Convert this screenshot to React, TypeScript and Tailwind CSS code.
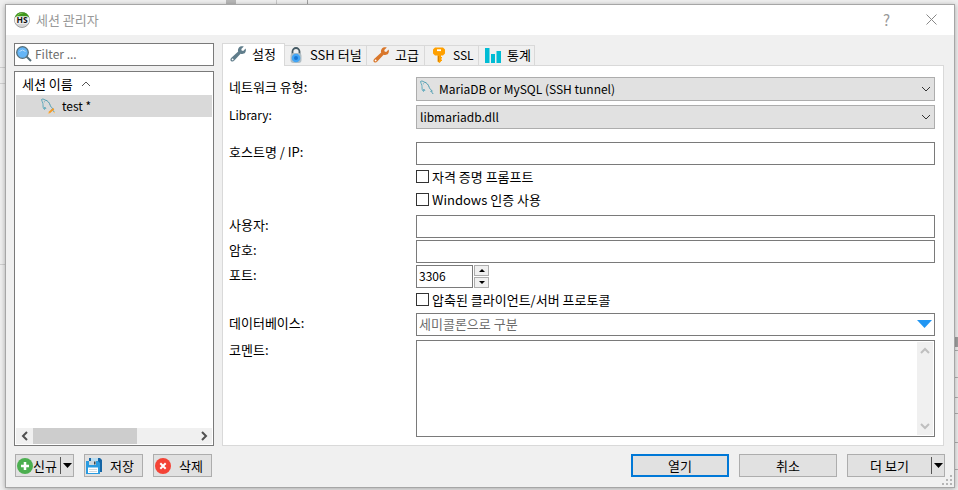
import { useState, type ReactNode } from "react";

const push =
  "flex h-[23px] items-center border border-[#adadad] bg-[#e1e1e1] text-black";
const box = "border border-[#7a7a7a] bg-white";

function Chevron({ dir, className }: { dir: "up" | "down" | "left" | "right"; className: string }) {
  const d = {
    up: "M1 7 5 3l4 4",
    down: "M1 3l4 4 4-4",
    left: "M7 1 3 5l4 4",
    right: "M3 1l4 4-4 4",
  }[dir];
  return (
    <svg viewBox="0 0 10 10" className={className} fill="none" stroke="currentColor" aria-hidden="true">
      <path d={d} />
    </svg>
  );
}

function Triangle({ up = false, className }: { up?: boolean; className: string }) {
  return (
    <svg viewBox="0 0 10 5" preserveAspectRatio="none" className={className} fill="currentColor" aria-hidden="true">
      <path d={up ? "M0 5 5 0l5 5z" : "M0 0h10L5 5z"} />
    </svg>
  );
}

function Logo() {
  return (
    <svg viewBox="0 0 16 16" className="size-4" aria-hidden="true">
      <circle cx="8" cy="8" r="7.5" fill="#d5d5d5" stroke="#8b8b8b" strokeWidth=".8" />
      <path d="M.7 5.500a7.700 7.700 0 0 1 14.600 0z" fill="#3f961c" />
      <path d="M2.500 4.500a6.500 6.500 0 0 1 7-3.300C6 1.800 4 3 2.500 4.500z" fill="#8bd35f" />
      <rect x=".8" y="4.300" width="14.400" height="7.400" rx="3" fill="#f4f4f4" />
      <text x="8" y="11" textAnchor="middle" fontSize="8.500" fontWeight="700" fontFamily="Open Sans, sans-serif" fill="#111">
        HS
      </text>
    </svg>
  );
}

function Magnifier() {
  return (
    <svg viewBox="0 0 16 16" className="size-4 shrink-0" aria-hidden="true">
      <path d="m10.500 10.500 4.500 4.500" stroke="#546e7a" strokeWidth="2" />
      <circle cx="6.500" cy="6.500" r="5.800" fill="#64b5f6" stroke="#546e7a" strokeWidth="1.300" />
      <path d="M3.500 5.500q3-3 6 0" stroke="#bbdefb" fill="none" />
    </svg>
  );
}

function Dolphin({ edited = false }: { edited?: boolean }) {
  return (
    <svg viewBox="0 0 16 16" className="size-4 shrink-0" fill="none" aria-hidden="true">
      <path
        d="M1.500 1.500c1-.8 2.500-.3 3.500.500 3 .5 4.500 3 5.300 5.500.4 1.500 1.700 2.300 3 3.500l-1.600.2c.9.8 1.800 1.800 2.500 2.800"
        stroke="#4a9bb0"
      />
      <path d="M1.500 1.500c.2 1.500 1 2.500 1.400 3.800.3 1.700-.1 3.700.6 5.200l1 1 .3-2.500 1.200 2" stroke="#5faabd" />
      <circle cx="4.300" cy="3.800" r=".5" fill="#4a9bb0" />
      {edited && (
        <>
          <path d="m9 14.700 4.700-4" stroke="#f59a23" strokeWidth="1.800" />
          <path d="m7.800 15.700 1.500-1.300M13.500 14l1.500 1" stroke="#ffc266" />
        </>
      )}
    </svg>
  );
}

function Wrench({ className }: { className: string }) {
  return (
    <svg viewBox="0 0 16 16" className={className} aria-hidden="true">
      <path
        fill="currentColor"
        d="M13.800.6 11.300 3l.3 1.600 1.600.3 2.400-2.400c.8 2.200-.1 4.300-1.700 5.100-1.200.6-2.300.5-3.300.1L4.300 14.500C3.400 15.700 2 15.900 1 15s-.7-2.400.4-3.300l6.800-6.200c-.5-1.200-.3-2.600.6-3.700C10 .3 12 0 13.800.6z"
      />
      <circle cx="2.600" cy="13.400" r=".9" fill="#fff" />
    </svg>
  );
}

function Padlock() {
  return (
    <svg viewBox="0 0 16 16" className="size-4" aria-hidden="true">
      <path d="M4.500 7V4.500a3.500 3.500 0 0 1 7 0V7" fill="none" stroke="#455a64" strokeWidth="1.800" />
      <rect x="2.500" y="6" width="11" height="10" rx="3" fill="#b0bec5" />
      <circle cx="8" cy="11" r="4.300" fill="#42a5f5" />
      <circle cx="8" cy="11" r="2" fill="#1976d2" />
    </svg>
  );
}

function Key() {
  return (
    <svg viewBox="0 0 16 16" className="size-4" aria-hidden="true">
      <path
        fill="#ffa000"
        d="M4 .5h8L14 2.500v4L12 8.500h-2V10h1v1.500h-1v1h1V14h-1v.5L8.500 16 6.500 14.500v-6H4L2 6.500v-4z"
      />
      <path d="M6 2.300h4v1.800H6z" fill="#fff" />
      <path d="M7.500 9v5.500" stroke="#d68000" />
    </svg>
  );
}

function Bars() {
  return (
    <svg viewBox="0 0 16 16" className="size-4" fill="#00bcd4" aria-hidden="true">
      <path d="M0 1h4.500v15H0zM6 7h4v9H6zM11.500 4H16v12h-4.500z" />
    </svg>
  );
}

function Plus() {
  return (
    <svg viewBox="0 0 16 16" className="size-4 shrink-0" aria-hidden="true">
      <circle cx="8" cy="8" r="8" fill="#4caf50" />
      <path d="M8 4v8M4 8h8" stroke="#fff" strokeWidth="2.500" />
    </svg>
  );
}

function Floppies() {
  return (
    <svg viewBox="0 0 16 16" className="size-4 shrink-0" aria-hidden="true">
      <path d="M3 0h11l2 2v12H3z" fill="#1565a5" />
      <path d="M5 0h7v4H5z" fill="#b9dcf0" />
      <path d="M0 3h12l2 2v11H0z" fill="#2a9be0" />
      <path d="M3 3h7v4H3z" fill="#cfd8dc" />
      <path d="M8 3.500h1.500v3H8z" fill="#37474f" />
      <path d="M2 9.500h10V15H2z" fill="#fff" />
      <path d="M3 11.500h8M3 13.500h8" stroke="#cfd8dc" />
    </svg>
  );
}

function Remove() {
  return (
    <svg viewBox="0 0 16 16" className="size-4 shrink-0" aria-hidden="true">
      <circle cx="8" cy="8" r="8" fill="#f44336" />
      <path d="m5.300 5.300 5.400 5.400m0-5.400-5.400 5.400" stroke="#fff" strokeWidth="2" />
    </svg>
  );
}

function Field({
  id,
  label,
  className = "",
  labelSize = "text-[13px]",
  children,
}: {
  id: string;
  label: string;
  className?: string;
  labelSize?: string;
  children: ReactNode;
}) {
  return (
    <div className={`flex items-start ${className}`}>
      <label htmlFor={id} className={`w-[187px] shrink-0 leading-[19px] ${labelSize}`}>
        {label}
      </label>
      <div className="min-w-0 flex-1">{children}</div>
    </div>
  );
}

function Check({ label }: { label: string }) {
  return (
    <label className="ml-[187px] flex h-[23px] items-center gap-[3px]">
      <input type="checkbox" className="size-[13px] appearance-none border border-[#333] bg-white checked:bg-[#0078d7]" />
      {label}
    </label>
  );
}

function Combo({ id, value, icon }: { id: string; value: string; icon?: ReactNode }) {
  return (
    <div className="relative">
      {icon && <span className="pointer-events-none absolute top-[3px] left-[3px]">{icon}</span>}
      <select
        id={id}
        className={`block h-6 w-full appearance-none border border-[#adadad] bg-[#e1e1e1] pr-6 text-xs ${icon ? "pl-[22px]" : "pl-[3px]"}`}
      >
        <option>{value}</option>
      </select>
      <Chevron dir="down" className="pointer-events-none absolute top-[7px] right-1 size-[10px] text-[#333]" />
    </div>
  );
}

const tabs = [
  { name: "설정", icon: <Wrench className="size-4 text-[#607d8b]" />, style: "w-[63px]" },
  { name: "SSH 터널", icon: <Padlock />, style: "w-[83px] pl-[3px]" },
  { name: "고급", icon: <Wrench className="size-4 text-[#d9772b]" />, style: "w-[59px] pl-[6px]" },
  { name: "SSL", icon: <Key />, style: "w-[55px] pl-[6px] text-xs" },
  { name: "통계", icon: <Bars />, style: "w-[57px] pl-[6px]" },
];

function Backdrop() {
  return (
    <div aria-hidden="true" className="absolute inset-0 overflow-hidden">
      <div className="absolute top-0 left-[226px] h-1 w-[10px] bg-[#b8b8b8]" />
      <div className="absolute top-0 left-[276px] h-1 w-px bg-[#c8c8c8]" />
      <div className="absolute top-0 left-[307px] h-1 w-px bg-[#a0a0a0]" />
      <div className="absolute top-[67px] left-0 h-[17px] w-[5px] border-y border-[#d0d0d0]" />
      <div className="absolute top-[264px] left-0 h-px w-[5px] bg-[#d0d0d0]" />
      <div className="absolute top-[337px] right-0 h-[10px] w-[3px] bg-[#a0a0a0]" />
      <div className="absolute top-[350px] right-0 h-7 w-[3px] border-y border-[#b0b0b0]" />
      <div className="absolute top-[397px] right-0 h-[17px] w-[3px] border-y border-[#b0b0b0]" />
      <div className="absolute top-[442px] right-0 h-7 w-[3px] border-y border-[#b0b0b0]" />
    </div>
  );
}

export default function App() {
  const [tab, setTab] = useState("설정");
  return (
    <div className="relative flex min-h-screen bg-[#efefef] pt-1 pr-[3px] pb-[2px] pl-[5px] font-['Noto_Sans_CJK_KR',sans-serif] text-[13px] leading-5 text-black">
      <Backdrop />
      <main className="relative flex min-w-0 flex-1 flex-col border border-[#a6a6a6] bg-[#f0f0f0] shadow-[0_1px_5px_rgba(0,0,0,0.3)]">
        <header className="flex h-[30px] items-center bg-white pb-px pl-2 text-[#999]">
          <Logo />
          <h1 className="ml-[6px] flex-1">세션 관리자</h1>
          <button aria-label="도움말" className="w-[45px] text-[15px]">
            ?
          </button>
          <button aria-label="닫기" className="flex w-[45px] justify-center">
            <svg viewBox="0 0 11 11" className="size-[11px]" stroke="#888" aria-hidden="true">
              <path d="m.5.5 10 10m0-10-10 10" />
            </svg>
          </button>
        </header>

        <div className="flex flex-1 gap-2 pt-2 pr-[10px] pl-2">
          <aside className="flex w-[200px] shrink-0 flex-col gap-[5px]">
            <label className={`flex h-[23px] items-center gap-[3px] px-px pb-px ${box}`}>
              <Magnifier />
              <input
                type="text"
                aria-label="Filter"
                placeholder="Filter ..."
                className="min-w-0 flex-1 text-xs outline-none placeholder:text-[#6d6d6d]"
              />
            </label>
            <div className={`flex flex-1 flex-col p-px ${box}`}>
              <button className="flex h-[22px] items-center gap-2 pb-px pl-[6px]">
                세션 이름
                <Chevron dir="up" className="size-[10px] text-[#555]" />
              </button>
              <ul className="flex-1">
                <li className="flex h-[22px] items-center gap-[6px] bg-[#d9d9d9] pb-px pl-6 text-xs">
                  <Dolphin edited />
                  test *
                </li>
              </ul>
              <div className="flex h-4 items-center bg-[#f0f0f0] text-[#505050]">
                <Chevron dir="left" className="mr-[3px] ml-1 size-[10px] stroke-2" />
                <div className="h-full w-[104px] bg-[#cdcdcd]" />
                <Chevron dir="right" className="mr-[3px] ml-auto size-[10px] stroke-2" />
              </div>
            </div>
          </aside>

          <section className="flex min-w-0 flex-1 flex-col">
            <div role="tablist" className="flex h-[22px] items-end">
              {tabs.map((t) => (
                <button
                  key={t.name}
                  role="tab"
                  aria-selected={tab === t.name}
                  onClick={() => setTab(t.name)}
                  className={`flex border border-b-0 border-[#d9d9d9] whitespace-nowrap ${t.style} ${
                    tab === t.name
                      ? "relative z-10 -mb-px h-[23px] items-center gap-[6px] bg-white pb-[3px] pl-[7px]"
                      : "-ml-px h-5 items-center gap-[6px] bg-[#f0f0f0] pb-px"
                  }`}
                >
                  {t.icon}
                  {t.name}
                </button>
              ))}
            </div>
            <form className="flex flex-1 flex-col border border-[#d9d9d9] bg-white pt-[11px] pr-2 pb-2 pl-[6px]">
              <Field id="network" label="네트워크 유형:">
                <Combo id="network" value="MariaDB or MySQL (SSH tunnel)" icon={<Dolphin />} />
              </Field>
              <Field id="library" label="Library:" labelSize="text-xs" className="mt-1">
                <Combo id="library" value="libmariadb.dll" />
              </Field>
              <Field id="host" label="호스트명 / IP:" className="mt-[13px]">
                <input id="host" type="text" className={`block h-[23px] w-full px-[3px] ${box}`} />
              </Field>
              <Check label="자격 증명 프롬프트" />
              <Check label="Windows 인증 사용" />
              <Field id="user" label="사용자:" className="mt-1">
                <input id="user" type="text" className={`block h-[23px] w-full px-[3px] ${box}`} />
              </Field>
              <Field id="password" label="암호:" className="mt-[2px]">
                <input id="password" type="password" className={`block h-[23px] w-full px-[3px] ${box}`} />
              </Field>
              <Field id="port" label="포트:" className="mt-[2px]">
                <div className="flex gap-px">
                  <input id="port" type="text" defaultValue="3306" className={`block h-[23px] w-[57px] px-[2px] pb-[2px] text-xs ${box}`} />
                  <div className="flex flex-col gap-px">
                    <button type="button" aria-label="증가" className="flex h-[11px] w-[15px] items-center justify-center border border-[#adadad] bg-[#f0f0f0]">
                      <Triangle up className="h-[3px] w-[6px]" />
                    </button>
                    <button type="button" aria-label="감소" className="flex h-[11px] w-[15px] items-center justify-center border border-[#adadad] bg-[#f0f0f0]">
                      <Triangle className="h-[3px] w-[6px]" />
                    </button>
                  </div>
                </div>
              </Field>
              <Check label="압축된 클라이언트/서버 프로토콜" />
              <Field id="database" label="데이터베이스:" className="mt-[2px]">
                <div className={`flex h-[23px] items-center pr-[2px] pb-[2px] ${box}`}>
                  <input
                    id="database"
                    type="text"
                    placeholder="세미콜론으로 구분"
                    className="min-w-0 flex-1 px-[2px] outline-none placeholder:text-[#6d6d6d]"
                  />
                  <button type="button" aria-label="데이터베이스 선택" className="flex">
                    <Triangle className="h-2 w-[15px] text-[#2196f3]" />
                  </button>
                </div>
              </Field>
              <div className="mt-1 flex flex-1">
                <label htmlFor="comment" className="w-[187px] shrink-0 leading-[19px]">
                  코멘트:
                </label>
                <div className={`flex min-w-0 flex-1 p-px ${box}`}>
                  <textarea id="comment" className="min-w-0 flex-1 resize-none px-[2px] outline-none" />
                  <div className="flex w-4 flex-col items-center justify-between bg-[#f0f0f0] py-1 text-[#bfbfbf]">
                    <Chevron dir="up" className="size-[10px] stroke-2" />
                    <Chevron dir="down" className="size-[10px] stroke-2" />
                  </div>
                </div>
              </div>
            </form>
          </section>
        </div>

        <footer className="flex gap-[10px] px-[9px] pt-2 pb-[10px]">
          <div className={`w-[59px] ${push}`}>
            <button className="flex flex-1 items-center pl-px whitespace-nowrap">
              <Plus />
              신규
            </button>
            <button aria-label="신규 메뉴" className="flex h-[17px] w-[13px] items-center justify-center border-l border-[#555]">
              <Triangle className="h-[5px] w-[9px]" />
            </button>
          </div>
          <button className={`w-[59px] gap-2 pl-px whitespace-nowrap ${push}`}>
            <Floppies />
            저장
          </button>
          <button className={`w-[59px] gap-2 pl-px whitespace-nowrap ${push}`}>
            <Remove />
            삭제
          </button>
          <button className="ml-auto flex h-[23px] w-[98px] items-center justify-center border-2 border-[#0078d7] bg-[#e1e1e1]">
            열기
          </button>
          <button className={`w-[98px] justify-center ${push}`}>취소</button>
          <div className={`w-[98px] ${push}`}>
            <button className="h-full flex-1">더 보기</button>
            <button aria-label="더 보기 메뉴" className="flex h-[17px] w-[13px] items-center justify-center border-l border-[#555]">
              <Triangle className="h-[5px] w-[9px]" />
            </button>
          </div>
        </footer>
        <svg viewBox="0 0 10 10" className="absolute right-[2px] bottom-[2px] size-[10px]" fill="#b5b5b5" aria-hidden="true">
          <path d="M8 0h2v2H8zM4 4h2v2H4zM8 4h2v2H8zM0 8h2v2H0zM4 8h2v2H4zM8 8h2v2H8z" />
        </svg>
      </main>
    </div>
  );
}
